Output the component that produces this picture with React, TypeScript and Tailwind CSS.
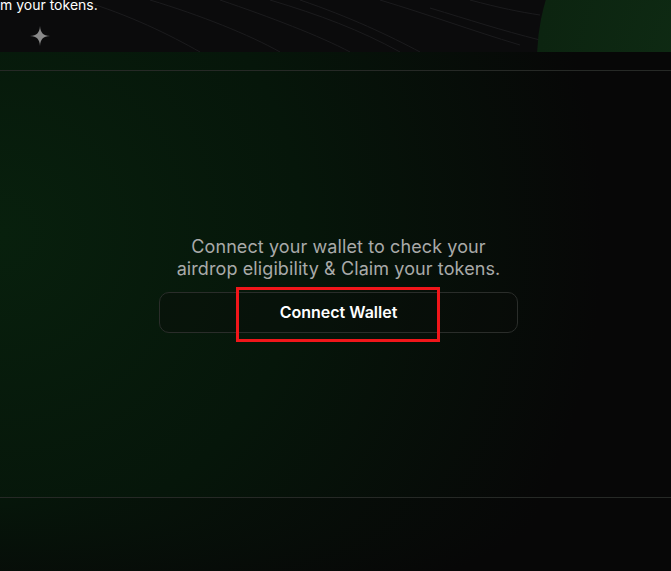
import { useState } from "react"

function Sparkle() {
    return (
        <svg width="22" height="22" viewBox="0 0 22 22" className="absolute left-[29px] top-[25px]">
            <path d="M11 1 C11.6 8 14 10.4 21 11 C14 11.6 11.6 14 11 21 C10.4 14 8 11.6 1 11 C8 10.4 10.4 8 11 1 Z" fill="#8a8a8a" />
        </svg>
    )
}

function Lines() {
    return (
        <svg width="671" height="52" viewBox="0 0 671 52" className="absolute inset-0">
            <g stroke="#1b1b1d" strokeWidth="1" fill="none">
                <path d="M80 0 C130 15 170 35 200 52" />
                <path d="M150 0 C200 15 250 35 280 52" />
                <path d="M220 0 C270 17 320 36 350 52" />
                <path d="M300 0 C350 17 390 36 420 52" />
                <path d="M380 0 C430 15 470 30 520 45" />
                <path d="M270 0 C320 15 360 30 400 52" />
                <path d="M430 8 C470 20 500 30 540 40" />
                <path d="M470 0 C500 8 520 12 540 15" />
            </g>
        </svg>
    )
}

export default function App() {
    const [connected, setConnected] = useState(false)

    return (
        <div className="w-[671px] h-[571px] overflow-hidden bg-[#070707] font-['Inter',sans-serif] flex flex-col">
            <header className="relative h-[52px] shrink-0 bg-[#0b0b0c] overflow-hidden">
                <Lines />
                <div className="absolute left-[537px] top-[-150px] w-[420px] h-[420px] rounded-full bg-[radial-gradient(circle_at_45%_50%,#0f2c14_0%,#0c2410_60%,#0a1c0d_100%)]" />
                <p className="relative text-white text-[14px] leading-none -mt-[2px]">m your tokens.</p>
                <Sparkle />
            </header>

            <main className="relative flex-1 flex flex-col bg-[radial-gradient(ellipse_100%_130%_at_0%_35%,#08200d_0%,#06160a_45%,#070707_90%)]">
                <div className="h-[18px] shrink-0" />
                <div className="h-px bg-[#262926]" />
                <section className="flex-1 flex flex-col items-center justify-center pl-[6px]">
                    <p className="text-[#a9aaa9] text-[18px] leading-[22px] text-center tracking-[0.1px]">
                        Connect your wallet to check your<br />
                        airdrop eligibility &amp; Claim your tokens.
                    </p>
                    <div className="relative mt-[12px]">
                        <button
                            onClick={() => setConnected(!connected)}
                            className="w-[359px] h-[41px] rounded-[10px] border border-[#2a2d2a] bg-[#0a0d0a]/40 text-white text-[16px] font-semibold"
                        >
                            Connect Wallet
                        </button>
                        <div className="absolute left-[77px] top-[-5px] w-[204px] h-[55px] border-[3px] border-[#f0161a] pointer-events-none" />
                    </div>
                </section>
                <div className="h-px bg-[#262926]" />
                <div className="h-[73px] shrink-0 bg-[radial-gradient(ellipse_90%_200%_at_0%_0%,#06160a_0%,#070707_90%)]" />
            </main>
        </div>
    )
}
